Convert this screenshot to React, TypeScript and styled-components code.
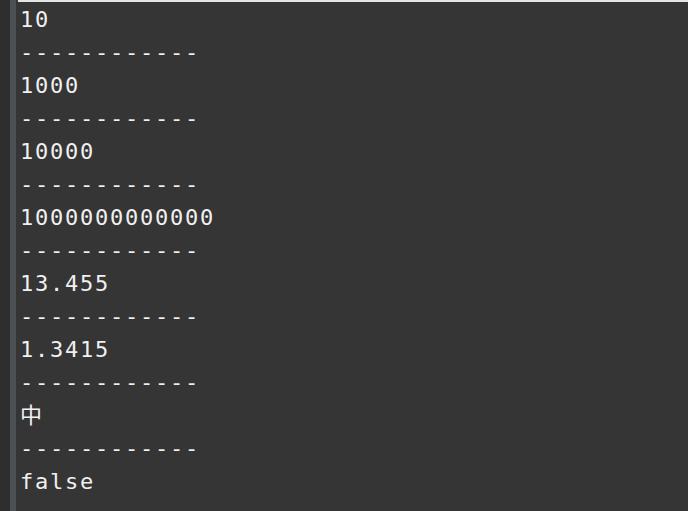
import React from "react";
import styled, { createGlobalStyle } from "styled-components";

const Global = createGlobalStyle`
  html, body { margin: 0; padding: 0; background: #353535; }
  body { width: 688px; height: 511px; overflow: hidden; }
`;

const Frame = styled.div`
  display: flex;
  width: 688px;
  height: 511px;
  background: #353535;
`;

const Gutter = styled.div`
  width: 10px;
  background: #2e2e2e;
  flex-shrink: 0;
`;

const Rail = styled.div`
  width: 6px;
  background: #4b5053;
  flex-shrink: 0;
`;

const Console = styled.div`
  flex: 1;
  padding-left: 2px;
  display: flex;
  flex-direction: column;
`;

const Output = styled.div`
  flex: 1;
  border-top: 2px solid #e4e4e4;
  padding: 1px 0 0 2px;
  font-family: "DejaVu Sans Mono", "Noto Sans CJK SC", monospace;
  font-size: 22px;
  letter-spacing: 1.75px;
  line-height: 33px;
  color: #f0f0f0;
`;

const Line = styled.div`
  white-space: pre;
`;

const lines = [
  "10",
  "------------",
  "1000",
  "------------",
  "10000",
  "------------",
  "1000000000000",
  "------------",
  "13.455",
  "------------",
  "1.3415",
  "------------",
  "中",
  "------------",
  "false",
];

export default function App() {
  return (
    <>
      <Global />
      <Frame>
        <Gutter />
        <Rail />
        <Console>
          <Output>
            {lines.map((l, i) => (
              <Line key={i}>{l}</Line>
            ))}
          </Output>
        </Console>
      </Frame>
    </>
  );
}
